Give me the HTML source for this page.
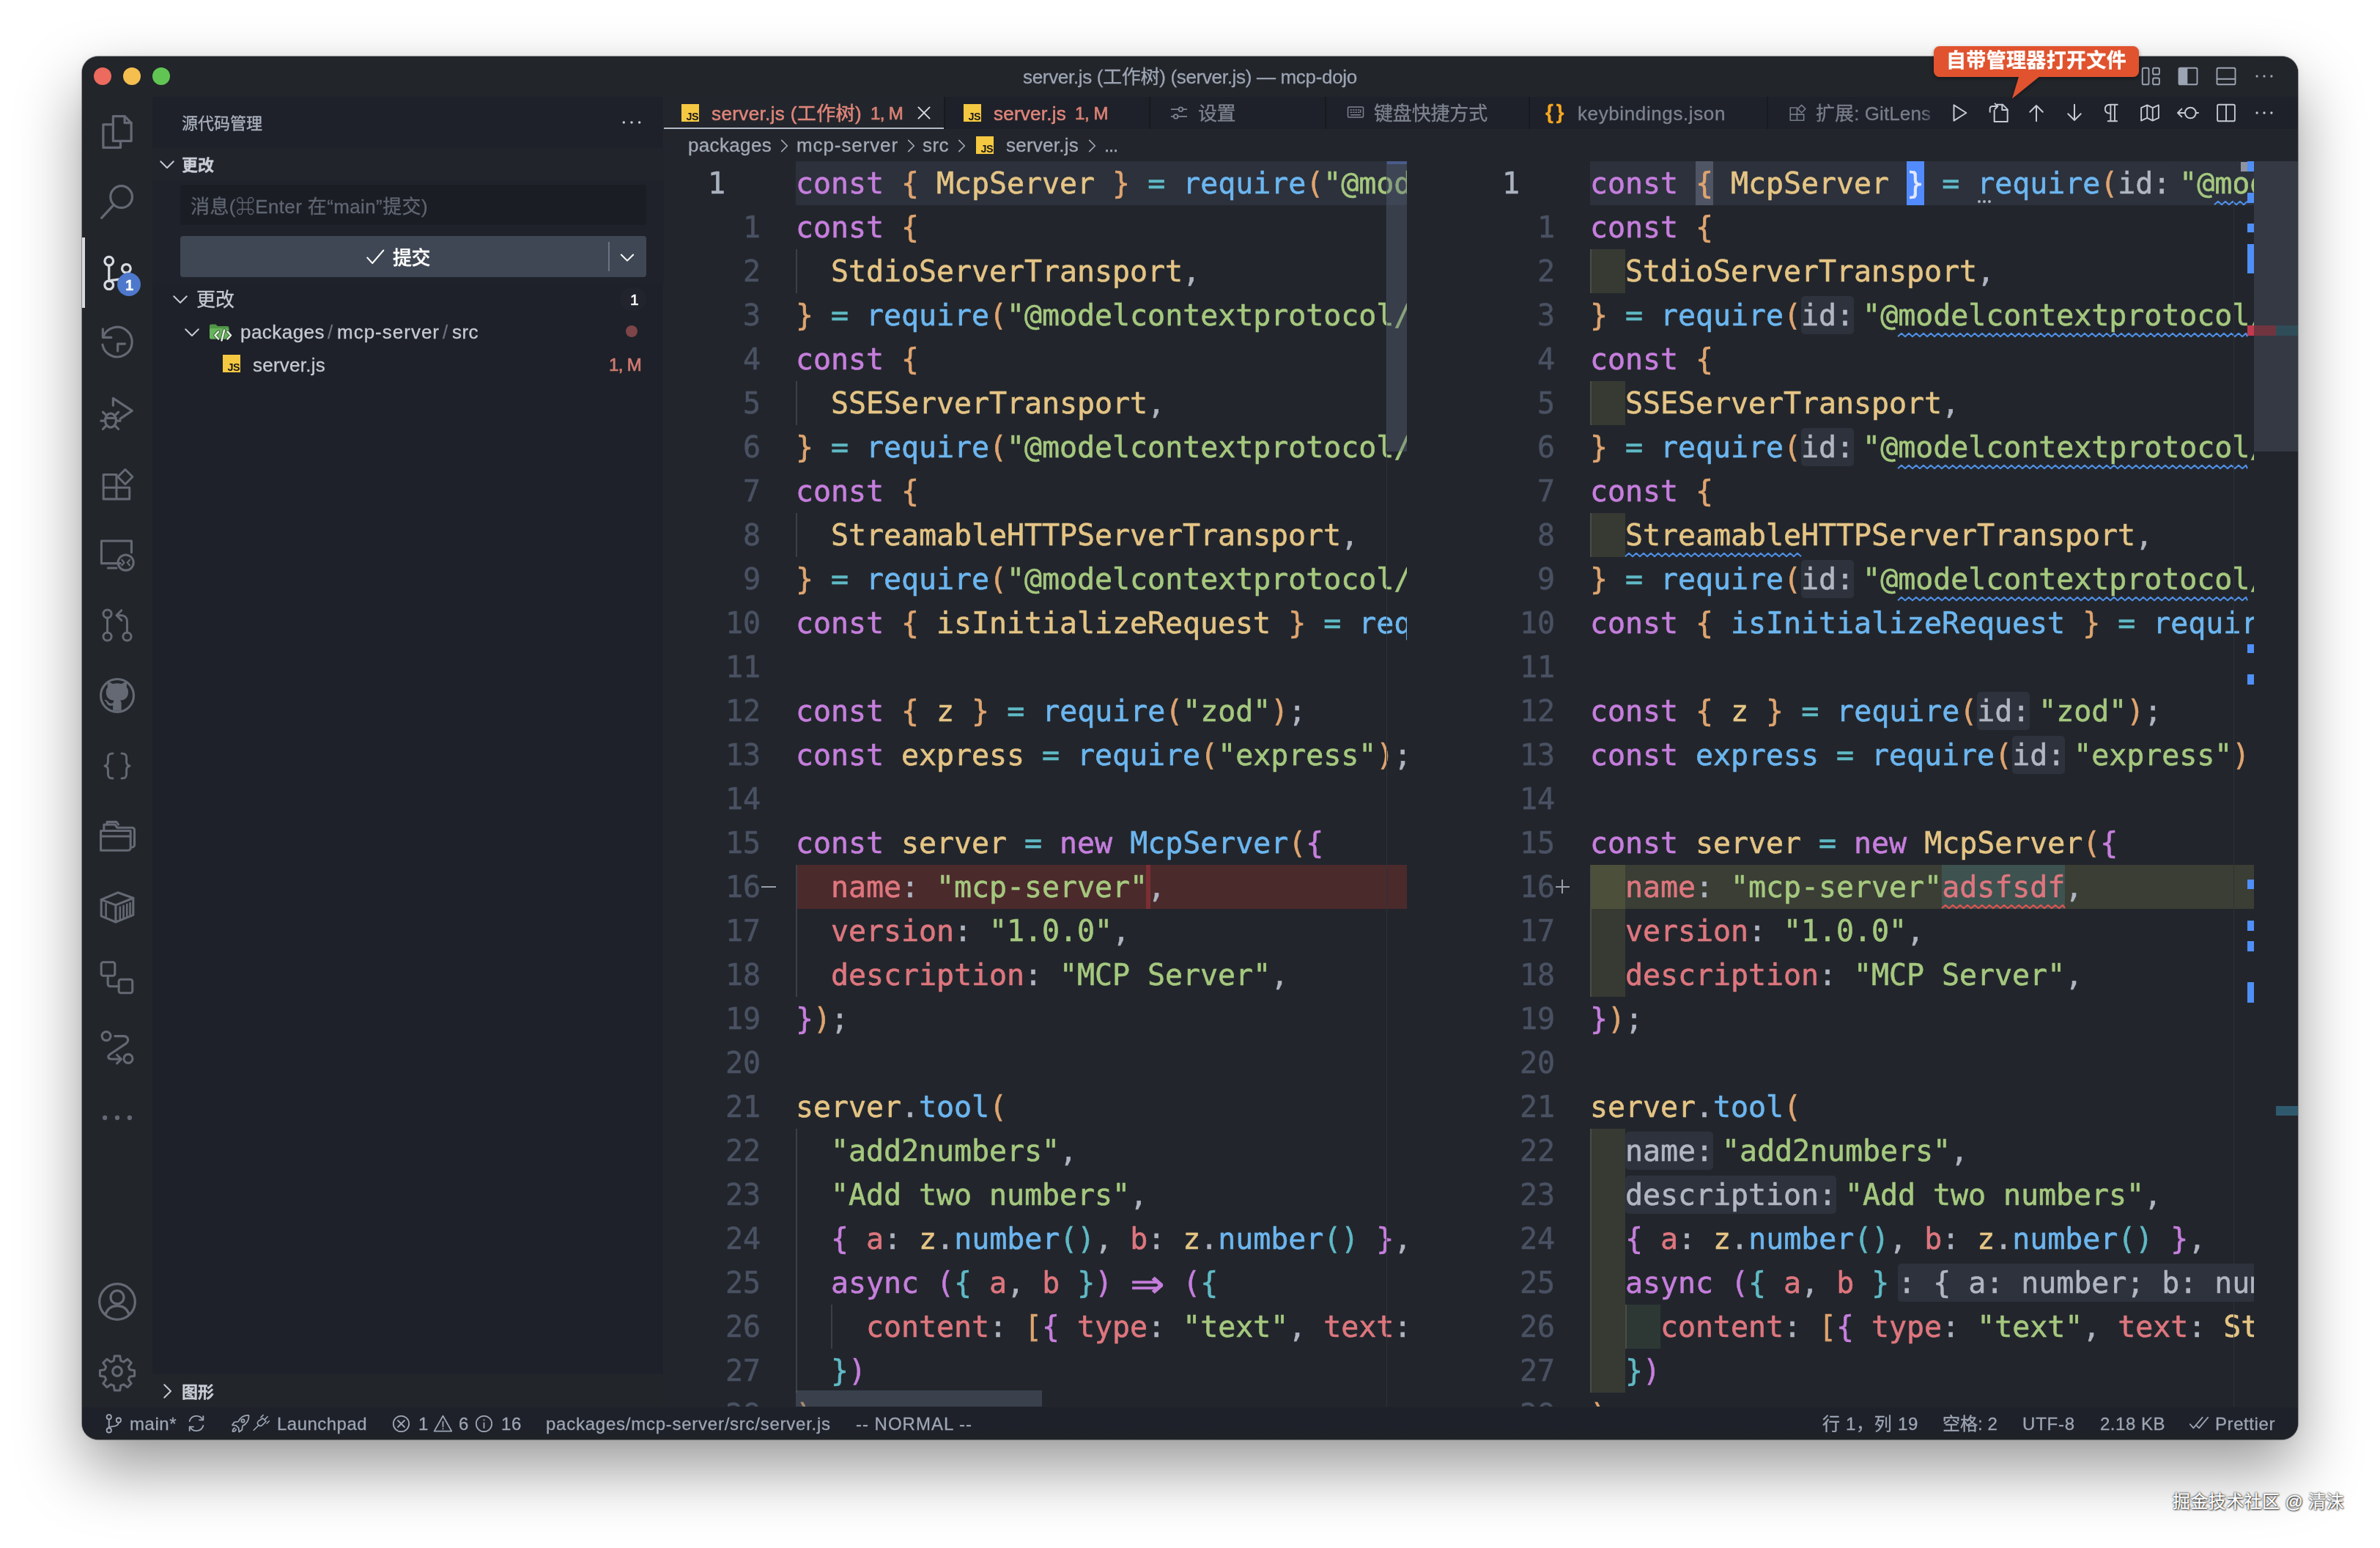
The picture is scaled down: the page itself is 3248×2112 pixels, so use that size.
<!DOCTYPE html>
<html lang="zh-CN"><head><meta charset="utf-8"><title>server.js (工作树) (server.js) — mcp-dojo</title>
<style>
html,body{margin:0;padding:0;}
body{width:3248px;height:2112px;background:#fff;position:relative;overflow:hidden;font-family:"Liberation Sans","Noto Sans CJK SC",sans-serif;}
.abs{position:absolute;}
.t{-webkit-text-stroke:0.3px currentColor;position:absolute;white-space:pre;font-family:"Liberation Sans","Noto Sans CJK SC",sans-serif;}
#win{position:absolute;left:112px;top:77px;width:3024px;height:1887px;border-radius:22px;background:#22262c;
  box-shadow:0 0 0 1px rgba(0,0,0,.32),0 40px 88px 0 rgba(0,0,0,.40),0 0 14px rgba(0,0,0,.05);}
#clip{position:absolute;left:112px;top:77px;width:3024px;height:1887px;border-radius:22px;overflow:hidden;}
/* everything inside #clip is positioned in page coordinates via #pg */
#pg{will-change:transform;position:absolute;left:-112px;top:-77px;width:3248px;height:2112px;}
.code{position:absolute;overflow:hidden;}
.ln{-webkit-text-stroke:0.55px currentColor;position:absolute;left:0;height:60px;white-space:pre;font-family:"DejaVu Sans Mono","Liberation Mono",monospace;font-size:40px;line-height:60px;letter-spacing:-0.08px;color:#abb2bf;}
.num{-webkit-text-stroke:0.5px currentColor;position:absolute;height:60px;width:72px;font-family:"DejaVu Sans Mono","Liberation Mono",monospace;font-size:40px;line-height:60px;letter-spacing:-0.08px;color:#495162;text-align:right;white-space:pre;}
.num.cur{text-align:left;color:#abb2bf;}
.k{color:#c67edd}.y{color:#e5c484}.b{color:#6cb6f0}.g{color:#a5c87e}.r{color:#de767e}.c{color:#5fb9c5}.o{color:#dfa46f}.w{color:#aeb4c0}
.hint{display:inline-block;height:52px;line-height:52px;vertical-align:top;margin-top:4px;background:#2e323c;color:#b0b6c2;border-radius:5px;}
.hl{margin-right:12px}.hr{margin-left:12px}
.lig{display:inline-block;width:48px;text-align:center;letter-spacing:0;}
svg{position:absolute;overflow:visible;}
</style></head><body>
<div id="win"></div>
<div id="clip"><div id="pg">
<div class="abs" style="left:112px;top:76px;width:3024px;height:56px;background:#22252a"></div>
<div class="abs" style="left:128px;top:92px;width:24px;height:24px;border-radius:50%;background:#ec6a5e"></div>
<div class="abs" style="left:168px;top:92px;width:24px;height:24px;border-radius:50%;background:#f4bf4f"></div>
<div class="abs" style="left:208px;top:92px;width:24px;height:24px;border-radius:50%;background:#61c554"></div>
<span class="t" id="t0" style="left:1396px;top:85.5px;font-size:26px;line-height:39.0px;color:#9da5b4;letter-spacing:-0.32px;">server.js (工作树) (server.js) — mcp-dojo</span><div class="abs" style="left:112px;top:132px;width:96px;height:1787px;background:#22252a"></div><div class="abs" style="left:112px;top:324px;width:4px;height:96px;background:#d7dae0"></div><svg style="left:133.0px;top:153.0px" width="54" height="54" viewBox="0 0 24 24" fill="none" stroke="#646973" stroke-width="1.45" stroke-linecap="round" stroke-linejoin="round"><path d="M9.5 2.5h7l4 4v11h-11z"/><path d="M16.5 2.5v4h4"/><path d="M9.5 7.5h-6v14h10.5v-4"/></svg><svg style="left:133.0px;top:249.1px" width="54" height="54" viewBox="0 0 24 24" fill="none" stroke="#646973" stroke-width="1.45" stroke-linecap="round" stroke-linejoin="round"><circle cx="14.5" cy="8.7" r="6.6"/><path d="M10 13.400L2.500 21.500"/></svg><svg style="left:133.0px;top:345.2px" width="54" height="54" viewBox="0 0 24 24" fill="none" stroke="#d7dae0" stroke-width="1.45" stroke-linecap="round" stroke-linejoin="round"><circle cx="7" cy="5" r="2.6"/><circle cx="7" cy="19.5" r="2.6"/><circle cx="17.5" cy="9.5" r="2.6"/><path d="M7 7.6v9.3"/><path d="M17.5 12.1c0 3.4-3 3.9-6 4.2-2.2.2-4 .4-4.5.9"/></svg><svg style="left:133.0px;top:441.3px" width="54" height="54" viewBox="0 0 24 24" fill="none" stroke="#646973" stroke-width="1.45" stroke-linecap="round" stroke-linejoin="round"><g transform="translate(12 12) scale(0.97) translate(-12 -12)"><path d="M3.2 8.2A9.3 9.3 0 1 1 2.8 13"/><path d="M3 3.2v5.3h5.3"/><path d="M12.3 17v-4.5h4.5"/></g></svg><svg style="left:133.0px;top:537.4px" width="54" height="54" viewBox="0 0 24 24" fill="none" stroke="#646973" stroke-width="1.45" stroke-linecap="round" stroke-linejoin="round"><path d="M9.5 7.2V2.8l11.5 7.6-7.2 4.9"/><ellipse cx="8" cy="16.3" rx="3.3" ry="4.2"/><path d="M5.5 13.3L3.3 11.2M10.5 13.3l2.2-2.1M4.7 16.5H2.2M13.8 16.5h-2.5M5.5 19.3l-2.2 2.2M10.5 19.3l2.2 2.2M5 14.8h6"/></svg><svg style="left:133.0px;top:633.5px" width="54" height="54" viewBox="0 0 24 24" fill="none" stroke="#646973" stroke-width="1.45" stroke-linecap="round" stroke-linejoin="round"><g transform="translate(12 12) scale(0.93) translate(-12 -12)"><path d="M3 5.5h8.5v8.5H3zM3 14h8.5v7.5H3zM11.500 14h8.5v7.5h-8.5z"/><path d="M17.200 2.200l4.800 4.800-4.800 4.800-4.800-4.800z"/></g></svg><svg style="left:133.0px;top:729.6px" width="54" height="54" viewBox="0 0 24 24" fill="none" stroke="#646973" stroke-width="1.45" stroke-linecap="round" stroke-linejoin="round"><g transform="translate(12 12) scale(0.94) translate(-12 -12)"><path d="M14 17.500H1.800V3h19.400v7.500"/><path d="M6 20.500h5.500"/><circle cx="17.500" cy="17" r="5"/><path d="M15 15.300l1.500 1.700-1.500 1.700M20 15.300l-1.500 1.700 1.500 1.700" stroke-width="1.1"/></g></svg><svg style="left:133.0px;top:825.7px" width="54" height="54" viewBox="0 0 24 24" fill="none" stroke="#646973" stroke-width="1.45" stroke-linecap="round" stroke-linejoin="round"><g transform="translate(12 12) scale(0.92) translate(-12 -12)"><circle cx="5.5" cy="4.500" r="2.700"/><circle cx="5.500" cy="19.500" r="2.700"/><circle cx="18.500" cy="19.500" r="2.700"/><path d="M5.500 7.200v9.600"/><path d="M18.500 16.800V9.500c0-2.500-1.500-4-4-4h-2.500"/><path d="M14.800 2.200L11.500 5.500l3.300 3.300"/></g></svg><svg style="left:133.0px;top:921.8px" width="54" height="54" viewBox="0 0 24 24" fill="none" stroke="#646973" stroke-width="1.45" stroke-linecap="round" stroke-linejoin="round"><g transform="translate(12 12) scale(0.97) translate(-12 -12)"><circle cx="12" cy="12" r="10.300"/><path fill="#646973" stroke="none" d="M9.300 21.500v-3.300c-3 .7-3.700-1.300-3.700-1.300-.5-1.200-1.200-1.600-1.200-1.600-1-.7.100-.700.100-.700 1.100.1 1.700 1.100 1.700 1.100 1 1.700 2.600 1.200 3.200.9.100-.700.400-1.200.7-1.500-2.500-.3-5.100-1.200-5.100-5.500 0-1.200.4-2.200 1.100-3-.100-.3-.500-1.400.100-3 0 0 .900-.300 3 1.100a10.500 10.500 0 0 1 5.500 0c2.100-1.400 3-1.100 3-1.100.6 1.600.2 2.700.1 3 .700.800 1.100 1.800 1.100 3 0 4.300-2.600 5.200-5.100 5.500.4.300.8 1 .8 2v4.400z"/></g></svg><svg style="left:133.0px;top:1017.9px" width="54" height="54" viewBox="0 0 24 24" fill="none" stroke="#646973" stroke-width="1.45" stroke-linecap="round" stroke-linejoin="round"><g transform="translate(12 12) scale(0.89) translate(-12 -12)"><path d="M9 3.500c-2.500 0-3.300 1-3.300 3v2.800c0 1.500-.7 2.400-2.200 2.700 1.500.3 2.200 1.200 2.200 2.700v2.800c0 2 .8 3 3.300 3"/><path d="M15 3.500c2.500 0 3.300 1 3.300 3v2.800c0 1.500.7 2.400 2.200 2.700-1.500.3-2.200 1.200-2.200 2.700v2.800c0 2-.8 3-3.300 3"/></g></svg><svg style="left:133.0px;top:1114.0px" width="54" height="54" viewBox="0 0 24 24" fill="none" stroke="#646973" stroke-width="1.45" stroke-linecap="round" stroke-linejoin="round"><g transform="translate(12 12) scale(0.95) translate(-12 -12)"><path d="M1.500 21V8.500h19v11c0 .8-.7 1.500-1.500 1.500z"/><path d="M1.500 12h19"/><path d="M3.500 8.500V4.500h7l1.500 2h9.500c.8 0 1.500.7 1.500 1.500v9.500c0 .8-.7 1.500-1.500 1.500"/><path d="M5.500 4.500V2.800h6l1.200 1.700"/></g></svg><svg style="left:133.0px;top:1210.1px" width="54" height="54" viewBox="0 0 24 24" fill="none" stroke="#646973" stroke-width="1.45" stroke-linecap="round" stroke-linejoin="round"><g transform="translate(12 12) scale(0.95) translate(-12 -12)"><path d="M1.800 7.500L12.500 3l9.700 3.500v10.800L11 21.800 1.800 18z"/><path d="M1.800 7.500L11 11l11.200-4.500M11 11v10.800"/><path d="M13.800 12.200v7.500M16 11.400v7.500M18.200 10.500v7.500M20.200 9.700v7.500M4.800 10v8.500" stroke-width="1.200"/></g></svg><svg style="left:133.0px;top:1306.2px" width="54" height="54" viewBox="0 0 24 24" fill="none" stroke="#646973" stroke-width="1.45" stroke-linecap="round" stroke-linejoin="round"><g transform="translate(12 12) scale(0.95) translate(-12 -12)"><rect x="1.800" y="2.500" width="8.700" height="8.700" rx="1.300"/><rect x="13" y="13.500" width="8.700" height="8.700" rx="1.300"/><path d="M6 11.200v5.300c0 .8.700 1.500 1.500 1.500H13"/></g></svg><svg style="left:133.0px;top:1402.3px" width="54" height="54" viewBox="0 0 24 24" fill="none" stroke="#646973" stroke-width="1.45" stroke-linecap="round" stroke-linejoin="round"><g transform="translate(12 12) scale(0.95) translate(-12 -12)"><circle cx="5" cy="4.800" r="2.800"/><circle cx="19" cy="19.200" r="2.800"/><path d="M10.500 4.800h5.500c3 0 3.800 3 1.500 4.800L7.500 16.300c-2 1.500-1.500 3.200 1 3.200h5.500"/><path d="M11.800 16.800l2.700 2.700-2.700 2.700"/></g></svg><svg style="left:133.0px;top:1498.4px" width="54" height="54" viewBox="0 0 24 24" fill="none" stroke="#646973" stroke-width="1.45" stroke-linecap="round" stroke-linejoin="round"><circle cx="4.500" cy="12" r="1.400" fill="#646973" stroke="none"/><circle cx="12" cy="12" r="1.400" fill="#646973" stroke="none"/><circle cx="19.500" cy="12" r="1.400" fill="#646973" stroke="none"/></svg><svg style="left:133.0px;top:1749.0px" width="54" height="54" viewBox="0 0 24 24" fill="none" stroke="#646973" stroke-width="1.45" stroke-linecap="round" stroke-linejoin="round"><circle cx="12" cy="12" r="10.800"/><circle cx="12" cy="9.300" r="4"/><path d="M4.800 19.800c1.200-3.600 4-5.300 7.200-5.300s6 1.700 7.200 5.300"/></svg><svg style="left:133.0px;top:1844.0px" width="54" height="54" viewBox="0 0 24 24" fill="none" stroke="#646973" stroke-width="1.45" stroke-linecap="round" stroke-linejoin="round"><circle cx="12" cy="12" r="2.800"/><path d="M10.200 1.800h3.600l.5 3.200 1.900.8 2.600-1.900 2.500 2.500-1.900 2.600.8 1.900 3.200.5v3.600l-3.200.5-.8 1.900 1.900 2.600-2.500 2.500-2.600-1.900-1.900.8-.5 3.200h-3.600l-.5-3.200-1.900-.8-2.600 1.900-2.500-2.500 1.900-2.600-.8-1.900-3.200-.5v-3.600l3.200-.5.8-1.900-1.900-2.600 2.500-2.500 2.600 1.900 1.900-.8z" transform="translate(12 12) scale(.92) translate(-12 -12)"/></svg><div class="abs" style="left:160px;top:372px;width:32px;height:32px;border-radius:50%;background:#4d78cc"></div><span class="t" id="t1" style="left:171px;top:374.0px;font-size:20px;line-height:30.0px;color:#ffffff;font-weight:700;">1</span><div class="abs" style="left:208px;top:132px;width:697px;height:1787px;background:#1e2129"></div><span class="t" id="t2" style="left:248px;top:151.5px;font-size:22px;line-height:33.0px;color:#abb2bf;">源代码管理</span><svg style="left:846.0px;top:151.0px" width="32" height="32" viewBox="0 0 24 24" fill="none" stroke="#646973" stroke-width="1.5" stroke-linecap="round" stroke-linejoin="round"><circle cx="4" cy="12" r="1.3" fill="#c5cad3" stroke="none"/><circle cx="12" cy="12" r="1.3" fill="#c5cad3" stroke="none"/><circle cx="20" cy="12" r="1.3" fill="#c5cad3" stroke="none"/></svg><div class="abs" style="left:208px;top:202px;width:698px;height:44px;background:#21242b"></div><svg style="left:213.0px;top:209.0px" width="30" height="30" viewBox="0 0 24 24" fill="none" stroke="#c5cad3" stroke-width="1.6" stroke-linecap="round" stroke-linejoin="round"><path d="M5 9l7 7 7-7"/></svg><span class="t" id="t3" style="left:248px;top:208.5px;font-size:22px;line-height:33.0px;color:#c8ccd4;font-weight:700;letter-spacing:-0.01px;">更改</span><div class="abs" style="left:208px;top:246px;width:698px;height:140px;background:#1f222a"></div><div class="abs" style="left:246px;top:252px;width:636px;height:55px;background:#1b1d24;border-radius:4px"></div><span class="t" id="t4" style="left:260px;top:262.5px;font-size:26px;line-height:39.0px;color:#5f6672;letter-spacing:0.38px;">消息(⌘Enter 在“main”提交)</span><div class="abs" style="left:246px;top:322px;width:636px;height:56px;background:#404754;border-radius:4px"></div><svg style="left:497.0px;top:336.0px" width="30" height="30" viewBox="0 0 24 24" fill="none" stroke="#ffffff" stroke-width="1.7" stroke-linecap="round" stroke-linejoin="round"><path d="M3.500 12.500l5.500 6L21 4.500"/></svg><span class="t" id="t5" style="left:536px;top:332.5px;font-size:26px;line-height:39.0px;color:#ffffff;font-weight:500;letter-spacing:-0.51px;">提交</span><div class="abs" style="left:830px;top:330px;width:2px;height:40px;background:#6b7280"></div><svg style="left:842.0px;top:337.0px" width="28" height="28" viewBox="0 0 24 24" fill="none" stroke="#ffffff" stroke-width="1.7" stroke-linecap="round" stroke-linejoin="round"><path d="M5 9l7 7 7-7"/></svg><svg style="left:231.0px;top:393.0px" width="30" height="30" viewBox="0 0 24 24" fill="none" stroke="#c5cad3" stroke-width="1.6" stroke-linecap="round" stroke-linejoin="round"><path d="M5 9l7 7 7-7"/></svg><span class="t" id="t6" style="left:268px;top:389.5px;font-size:26px;line-height:39.0px;color:#c5cad3;letter-spacing:-0.01px;">更改</span><div class="abs" style="left:846px;top:392px;width:36px;height:32px;border-radius:16px;background:#21242c"></div><span class="t" id="t7" style="left:860px;top:393.2px;font-size:21px;line-height:31.5px;color:#ffffff;-webkit-text-stroke:0.6px currentColor;">1</span><svg style="left:247.0px;top:438.0px" width="30" height="30" viewBox="0 0 24 24" fill="none" stroke="#c5cad3" stroke-width="1.6" stroke-linecap="round" stroke-linejoin="round"><path d="M5 9l7 7 7-7"/></svg><svg style="left:284px;top:437px" width="36" height="32" viewBox="0 0 36 32"><path d="M2 7.500a2 2 0 0 1 2-2h6.500l2.500 2.500h13.400a2 2 0 0 1 2 2V23.400a2 2 0 0 1-2 2H4a2 2 0 0 1-2-2z" fill="#4f9645"/><path d="M2 12.500a1.500 1.500 0 0 1 1.500-1.500h23.400a1.500 1.500 0 0 1 1.500 1.500V23.400a2 2 0 0 1-2 2H4a2 2 0 0 1-2-2z" fill="#67b45b"/><path d="M14 15.500l-4.500 5 4.500 5M26.500 15.500l4.500 5-4.500 5M22 13.500l-3.500 14" fill="none" stroke="#1d2026" stroke-opacity=".55" stroke-width="4.600" stroke-linecap="round" stroke-linejoin="round"/><path d="M14 15.500l-4.500 5 4.500 5M26.500 15.500l4.500 5-4.500 5M22 13.500l-3.500 14" fill="none" stroke="#e4f3e2" stroke-width="2.500" stroke-linecap="round" stroke-linejoin="round"/></svg><span class="t" id="t8" style="left:328px;top:433.5px;font-size:26px;line-height:39.0px;color:#c5cad3;letter-spacing:0.46px;">packages</span><span class="t" id="t9" style="left:447px;top:433.5px;font-size:26px;line-height:39.0px;color:#6b717d;">/</span><span class="t" id="t10" style="left:460px;top:433.5px;font-size:26px;line-height:39.0px;color:#c5cad3;letter-spacing:1.00px;">mcp-server</span><span class="t" id="t11" style="left:604px;top:433.5px;font-size:26px;line-height:39.0px;color:#6b717d;">/</span><span class="t" id="t12" style="left:617px;top:433.5px;font-size:26px;line-height:39.0px;color:#c5cad3;letter-spacing:0.44px;">src</span><div class="abs" style="left:854px;top:444px;width:16px;height:16px;border-radius:50%;background:#7d4548"></div><div class="abs" style="left:304px;top:484px;width:24px;height:24px;background:#f5c842;overflow:hidden"><span style="position:absolute;right:1px;bottom:0px;font:700 14.4px/1 'Liberation Sans','Noto Sans CJK SC',sans-serif;color:#1a1a1a;letter-spacing:-0.5px">JS</span></div><span class="t" id="t13" style="left:345px;top:478.5px;font-size:26px;line-height:39.0px;color:#c5cad3;letter-spacing:0.24px;">server.js</span><span class="t" id="t14" style="left:831px;top:480.0px;font-size:24px;line-height:36.0px;color:#cf7a70;letter-spacing:-0.67px;-webkit-text-stroke:0.7px currentColor;">1, M</span><div class="abs" style="left:208px;top:1875px;width:698px;height:44px;background:#22252a"></div><svg style="left:213.0px;top:1883.0px" width="30" height="30" viewBox="0 0 24 24" fill="none" stroke="#c5cad3" stroke-width="1.6" stroke-linecap="round" stroke-linejoin="round"><path d="M9 5l7 7-7 7"/></svg><span class="t" id="t15" style="left:248px;top:1882.5px;font-size:22px;line-height:33.0px;color:#c8ccd4;font-weight:700;letter-spacing:-0.01px;">图形</span><div class="abs" style="left:906px;top:176px;width:2230px;height:1743px;background:#22262c"></div><div class="code" style="left:1086px;top:220px;width:834px;height:1699px"><div class="abs" style="left:0;top:0;width:834px;height:60px;background:#2c313c"></div><div class="abs" style="left:0;top:960px;width:834px;height:60px;background:#4b2a2c"></div><div class="abs" style="left:478px;top:960px;width:6px;height:60px;background:#7a2f33"></div><div class="abs" style="left:0px;top:120px;width:2px;height:60px;background:#3b4048"></div><div class="abs" style="left:0px;top:300px;width:2px;height:60px;background:#3b4048"></div><div class="abs" style="left:0px;top:480px;width:2px;height:60px;background:#3b4048"></div><div class="abs" style="left:0px;top:960px;width:2px;height:180px;background:#3b4048"></div><div class="abs" style="left:0px;top:1320px;width:2px;height:360px;background:#3b4048"></div><div class="abs" style="left:48px;top:1560px;width:2px;height:60px;background:#3b4048"></div><div class="ln" style="top:0px"><span class="k">const</span> <span class="o">{</span> <span class="y">McpServer</span> <span class="o">}</span> <span class="c">=</span> <span class="b">require</span><span class="o">(</span><span class="g">"</span><span class="g">@modelcontextprotocol/sdk/server/mcp.js</span><span class="g">"</span><span class="o">)</span><span class="w">;</span></div><div class="ln" style="top:60px"><span class="k">const</span> <span class="o">{</span></div><div class="ln" style="top:120px">  <span class="y">StdioServerTransport</span><span class="w">,</span></div><div class="ln" style="top:180px"><span class="o">}</span> <span class="c">=</span> <span class="b">require</span><span class="o">(</span><span class="g">"</span><span class="g">@modelcontextprotocol/sdk/server/stdio.js</span><span class="g">"</span><span class="o">)</span><span class="w">;</span></div><div class="ln" style="top:240px"><span class="k">const</span> <span class="o">{</span></div><div class="ln" style="top:300px">  <span class="y">SSEServerTransport</span><span class="w">,</span></div><div class="ln" style="top:360px"><span class="o">}</span> <span class="c">=</span> <span class="b">require</span><span class="o">(</span><span class="g">"</span><span class="g">@modelcontextprotocol/sdk/server/sse.js</span><span class="g">"</span><span class="o">)</span><span class="w">;</span></div><div class="ln" style="top:420px"><span class="k">const</span> <span class="o">{</span></div><div class="ln" style="top:480px">  <span class="y">StreamableHTTPServerTransport</span><span class="w">,</span></div><div class="ln" style="top:540px"><span class="o">}</span> <span class="c">=</span> <span class="b">require</span><span class="o">(</span><span class="g">"</span><span class="g">@modelcontextprotocol/sdk/server/streamableHttp.js</span><span class="g">"</span><span class="o">)</span><span class="w">;</span></div><div class="ln" style="top:600px"><span class="k">const</span> <span class="o">{</span> <span class="y">isInitializeRequest</span> <span class="o">}</span> <span class="c">=</span> <span class="b">require</span><span class="o">(</span><span class="g">"</span><span class="g">@modelcontextprotocol/sdk/types.js</span><span class="g">"</span><span class="o">)</span><span class="w">;</span></div><div class="ln" style="top:660px"></div><div class="ln" style="top:720px"><span class="k">const</span> <span class="o">{</span> <span class="y">z</span> <span class="o">}</span> <span class="c">=</span> <span class="b">require</span><span class="o">(</span><span class="g">"</span><span class="g">zod</span><span class="g">"</span><span class="o">)</span><span class="w">;</span></div><div class="ln" style="top:780px"><span class="k">const</span> <span class="y">express</span> <span class="c">=</span> <span class="b">require</span><span class="o">(</span><span class="g">"</span><span class="g">express</span><span class="g">"</span><span class="o">)</span><span class="w">;</span></div><div class="ln" style="top:840px"></div><div class="ln" style="top:900px"><span class="k">const</span> <span class="y">server</span> <span class="c">=</span> <span class="k">new</span> <span class="b">McpServer</span><span class="o">(</span><span class="k">{</span></div><div class="ln" style="top:960px">  <span class="r">name</span><span class="w">:</span> <span class="g">"</span><span class="g">mcp-server</span><span class="g">"</span><span class="w">,</span></div><div class="ln" style="top:1020px">  <span class="r">version</span><span class="w">:</span> <span class="g">"</span><span class="g">1.0.0</span><span class="g">"</span><span class="w">,</span></div><div class="ln" style="top:1080px">  <span class="r">description</span><span class="w">:</span> <span class="g">"</span><span class="g">MCP Server</span><span class="g">"</span><span class="w">,</span></div><div class="ln" style="top:1140px"><span class="k">}</span><span class="o">)</span><span class="w">;</span></div><div class="ln" style="top:1200px"></div><div class="ln" style="top:1260px"><span class="y">server</span><span class="w">.</span><span class="b">tool</span><span class="o">(</span></div><div class="ln" style="top:1320px">  <span class="g">"</span><span class="g">add2numbers</span><span class="g">"</span><span class="w">,</span></div><div class="ln" style="top:1380px">  <span class="g">"</span><span class="g">Add two numbers</span><span class="g">"</span><span class="w">,</span></div><div class="ln" style="top:1440px">  <span class="k">{</span> <span class="r">a</span><span class="w">:</span> <span class="y">z</span><span class="w">.</span><span class="b">number</span><span class="c">()</span><span class="w">,</span> <span class="r">b</span><span class="w">:</span> <span class="y">z</span><span class="w">.</span><span class="b">number</span><span class="c">()</span> <span class="k">}</span><span class="w">,</span></div><div class="ln" style="top:1500px">  <span class="k">async</span> <span class="k">(</span><span class="c">{</span> <span class="r">a</span><span class="w">,</span> <span class="r">b</span> <span class="c">}</span><span class="k">)</span> <span class="k lig"><span style="display:inline-block;transform:scale(1.9,1.7) translateY(-1px)">⇒</span></span> <span class="k">(</span><span class="c">{</span></div><div class="ln" style="top:1560px">    <span class="r">content</span><span class="w">:</span> <span class="o">[</span><span class="k">{</span> <span class="r">type</span><span class="w">:</span> <span class="g">"</span><span class="g">text</span><span class="g">"</span><span class="w">,</span> <span class="r">text</span><span class="w">:</span> <span class="y">String</span><span class="c">(</span><span class="r">a</span> <span class="c">+</span> <span class="r">b</span><span class="c">)</span> <span class="k">}</span><span class="o">]</span><span class="w">,</span></div><div class="ln" style="top:1620px">  <span class="c">}</span><span class="k">)</span></div><div class="ln" style="top:1680px"><span class="o">)</span><span class="w">;</span></div></div><div class="num cur" style="left:966px;top:220px">1</div><div class="num" style="left:966px;top:280px;">1</div><div class="num" style="left:966px;top:340px;">2</div><div class="num" style="left:966px;top:400px;">3</div><div class="num" style="left:966px;top:460px;">4</div><div class="num" style="left:966px;top:520px;">5</div><div class="num" style="left:966px;top:580px;">6</div><div class="num" style="left:966px;top:640px;">7</div><div class="num" style="left:966px;top:700px;">8</div><div class="num" style="left:966px;top:760px;">9</div><div class="num" style="left:966px;top:820px;">10</div><div class="num" style="left:966px;top:880px;">11</div><div class="num" style="left:966px;top:940px;">12</div><div class="num" style="left:966px;top:1000px;">13</div><div class="num" style="left:966px;top:1060px;">14</div><div class="num" style="left:966px;top:1120px;">15</div><div class="num" style="left:966px;top:1180px;">16</div><div class="num" style="left:966px;top:1240px;">17</div><div class="num" style="left:966px;top:1300px;">18</div><div class="num" style="left:966px;top:1360px;">19</div><div class="num" style="left:966px;top:1420px;">20</div><div class="num" style="left:966px;top:1480px;">21</div><div class="num" style="left:966px;top:1540px;">22</div><div class="num" style="left:966px;top:1600px;">23</div><div class="num" style="left:966px;top:1660px;">24</div><div class="num" style="left:966px;top:1720px;">25</div><div class="num" style="left:966px;top:1780px;">26</div><div class="num" style="left:966px;top:1840px;">27</div><div class="num" style="left:966px;top:1900px;height:19px;overflow:hidden;">28</div><div class="code" style="left:2170px;top:220px;width:906px;height:1699px"><div class="abs" style="left:0;top:0;width:906px;height:60px;background:#2c313c"></div><div class="abs" style="left:0;top:960px;width:906px;height:60px;background:#3a3e35"></div><div class="abs" style="left:0px;top:120px;width:48px;height:60px;background:#373a33"></div><div class="abs" style="left:0px;top:120px;width:2px;height:60px;background:#4a4d45"></div><div class="abs" style="left:0px;top:300px;width:48px;height:60px;background:#373a33"></div><div class="abs" style="left:0px;top:300px;width:2px;height:60px;background:#4a4d45"></div><div class="abs" style="left:0px;top:480px;width:48px;height:60px;background:#373a33"></div><div class="abs" style="left:0px;top:480px;width:2px;height:60px;background:#4a4d45"></div><div class="abs" style="left:0px;top:960px;width:48px;height:180px;background:#373a33"></div><div class="abs" style="left:0px;top:960px;width:48px;height:60px;background:#4c503a"></div><div class="abs" style="left:0px;top:960px;width:2px;height:180px;background:#4a4d45"></div><div class="abs" style="left:0px;top:1320px;width:48px;height:360px;background:#373a33"></div><div class="abs" style="left:0px;top:1320px;width:2px;height:360px;background:#4a4d45"></div><div class="abs" style="left:48px;top:1560px;width:48px;height:60px;background:#2d3835"></div><div class="abs" style="left:48px;top:1560px;width:2px;height:60px;background:#4a4d45"></div><div class="abs" style="left:144px;top:0;width:24px;height:60px;background:#505565"></div><div class="abs" style="left:432px;top:0;width:24px;height:60px;background:#528bff"></div><div class="ln" style="top:0px"><span class="k">const</span> <span class="o">{</span> <span class="y">McpServer</span> <span style="color:#e3e8ff">}</span> <span class="c">=</span> <span class="b">require</span><span class="o">(</span><span class="hint hl">id:</span><span class="g">"</span><span class="g">@modelcontextprotocol/sdk/server/mcp.js</span><span class="g">"</span><span class="o">)</span><span class="w">;</span></div><div class="ln" style="top:60px"><span class="k">const</span> <span class="o">{</span></div><div class="ln" style="top:120px">  <span class="y">StdioServerTransport</span><span class="w">,</span></div><div class="ln" style="top:180px"><span class="o">}</span> <span class="c">=</span> <span class="b">require</span><span class="o">(</span><span class="hint hl">id:</span><span class="g">"</span><span class="g">@modelcontextprotocol/sdk/server/stdio.js</span><span class="g">"</span><span class="o">)</span><span class="w">;</span></div><div class="ln" style="top:240px"><span class="k">const</span> <span class="o">{</span></div><div class="ln" style="top:300px">  <span class="y">SSEServerTransport</span><span class="w">,</span></div><div class="ln" style="top:360px"><span class="o">}</span> <span class="c">=</span> <span class="b">require</span><span class="o">(</span><span class="hint hl">id:</span><span class="g">"</span><span class="g">@modelcontextprotocol/sdk/server/sse.js</span><span class="g">"</span><span class="o">)</span><span class="w">;</span></div><div class="ln" style="top:420px"><span class="k">const</span> <span class="o">{</span></div><div class="ln" style="top:480px">  <span class="y">StreamableHTTPServerTransport</span><span class="w">,</span></div><div class="ln" style="top:540px"><span class="o">}</span> <span class="c">=</span> <span class="b">require</span><span class="o">(</span><span class="hint hl">id:</span><span class="g">"</span><span class="g">@modelcontextprotocol/sdk/server/streamableHttp.js</span><span class="g">"</span><span class="o">)</span><span class="w">;</span></div><div class="ln" style="top:600px"><span class="k">const</span> <span class="o">{</span> <span class="b">isInitializeRequest</span> <span class="o">}</span> <span class="c">=</span> <span class="b">require</span><span class="o">(</span><span class="g">"</span><span class="g">@modelcontextprotocol/sdk/types.js</span><span class="g">"</span><span class="o">)</span><span class="w">;</span></div><div class="ln" style="top:660px"></div><div class="ln" style="top:720px"><span class="k">const</span> <span class="o">{</span> <span class="y">z</span> <span class="o">}</span> <span class="c">=</span> <span class="b">require</span><span class="o">(</span><span class="hint hl">id:</span><span class="g">"</span><span class="g">zod</span><span class="g">"</span><span class="o">)</span><span class="w">;</span></div><div class="ln" style="top:780px"><span class="k">const</span> <span class="b">express</span> <span class="c">=</span> <span class="b">require</span><span class="o">(</span><span class="hint hl">id:</span><span class="g">"</span><span class="g">express</span><span class="g">"</span><span class="o">)</span><span class="w">;</span></div><div class="ln" style="top:840px"></div><div class="ln" style="top:900px"><span class="k">const</span> <span class="y">server</span> <span class="c">=</span> <span class="k">new</span> <span class="y">McpServer</span><span class="o">(</span><span class="k">{</span></div><div class="ln" style="top:960px">  <span class="r">name</span><span class="w">:</span> <span class="g">"</span><span class="g">mcp-server</span><span class="g">"</span><span class="r" style="background:#3e524f;display:inline-block;height:60px;vertical-align:top">adsfsdf</span><span class="w">,</span></div><div class="ln" style="top:1020px">  <span class="r">version</span><span class="w">:</span> <span class="g">"</span><span class="g">1.0.0</span><span class="g">"</span><span class="w">,</span></div><div class="ln" style="top:1080px">  <span class="r">description</span><span class="w">:</span> <span class="g">"</span><span class="g">MCP Server</span><span class="g">"</span><span class="w">,</span></div><div class="ln" style="top:1140px"><span class="k">}</span><span class="o">)</span><span class="w">;</span></div><div class="ln" style="top:1200px"></div><div class="ln" style="top:1260px"><span class="y">server</span><span class="w">.</span><span class="b">tool</span><span class="o">(</span></div><div class="ln" style="top:1320px">  <span class="hint hl">name:</span><span class="g">"</span><span class="g">add2numbers</span><span class="g">"</span><span class="w">,</span></div><div class="ln" style="top:1380px">  <span class="hint hl">description:</span><span class="g">"</span><span class="g">Add two numbers</span><span class="g">"</span><span class="w">,</span></div><div class="ln" style="top:1440px">  <span class="k">{</span> <span class="r">a</span><span class="w">:</span> <span class="y">z</span><span class="w">.</span><span class="b">number</span><span class="c">()</span><span class="w">,</span> <span class="r">b</span><span class="w">:</span> <span class="y">z</span><span class="w">.</span><span class="b">number</span><span class="c">()</span> <span class="k">}</span><span class="w">,</span></div><div class="ln" style="top:1500px">  <span class="k">async</span> <span class="k">(</span><span class="c">{</span> <span class="r">a</span><span class="w">,</span> <span class="r">b</span> <span class="c">}</span><span class="hint hr">: { a: number; b: number; }</span><span class="k">)</span> <span class="k lig"><span style="display:inline-block;transform:scale(1.9,1.7) translateY(-1px)">⇒</span></span> <span class="k">(</span><span class="c">{</span></div><div class="ln" style="top:1560px">    <span class="r">content</span><span class="w">:</span> <span class="o">[</span><span class="k">{</span> <span class="r">type</span><span class="w">:</span> <span class="g">"</span><span class="g">text</span><span class="g">"</span><span class="w">,</span> <span class="r">text</span><span class="w">:</span> <span class="y">String</span><span class="c">(</span><span class="r">a</span> <span class="c">+</span> <span class="r">b</span><span class="c">)</span> <span class="k">}</span><span class="o">]</span><span class="w">,</span></div><div class="ln" style="top:1620px">  <span class="c">}</span><span class="k">)</span></div><div class="ln" style="top:1680px"><span class="o">)</span><span class="w">;</span></div></div><div class="num cur" style="left:2050px;top:220px">1</div><div class="num" style="left:2050px;top:280px;">1</div><div class="num" style="left:2050px;top:340px;">2</div><div class="num" style="left:2050px;top:400px;">3</div><div class="num" style="left:2050px;top:460px;">4</div><div class="num" style="left:2050px;top:520px;">5</div><div class="num" style="left:2050px;top:580px;">6</div><div class="num" style="left:2050px;top:640px;">7</div><div class="num" style="left:2050px;top:700px;">8</div><div class="num" style="left:2050px;top:760px;">9</div><div class="num" style="left:2050px;top:820px;">10</div><div class="num" style="left:2050px;top:880px;">11</div><div class="num" style="left:2050px;top:940px;">12</div><div class="num" style="left:2050px;top:1000px;">13</div><div class="num" style="left:2050px;top:1060px;">14</div><div class="num" style="left:2050px;top:1120px;">15</div><div class="num" style="left:2050px;top:1180px;">16</div><div class="num" style="left:2050px;top:1240px;">17</div><div class="num" style="left:2050px;top:1300px;">18</div><div class="num" style="left:2050px;top:1360px;">19</div><div class="num" style="left:2050px;top:1420px;">20</div><div class="num" style="left:2050px;top:1480px;">21</div><div class="num" style="left:2050px;top:1540px;">22</div><div class="num" style="left:2050px;top:1600px;">23</div><div class="num" style="left:2050px;top:1660px;">24</div><div class="num" style="left:2050px;top:1720px;">25</div><div class="num" style="left:2050px;top:1780px;">26</div><div class="num" style="left:2050px;top:1840px;">27</div><div class="num" style="left:2050px;top:1900px;height:19px;overflow:hidden;">28</div><svg style="left:0;top:0" width="3248" height="2112"><path d="M2590 459.2L2595 454.8L2600 459.2L2605 454.8L2610 459.2L2615 454.8L2620 459.2L2625 454.8L2630 459.2L2635 454.8L2640 459.2L2645 454.8L2650 459.2L2655 454.8L2660 459.2L2665 454.8L2670 459.2L2675 454.8L2680 459.2L2685 454.8L2690 459.2L2695 454.8L2700 459.2L2705 454.8L2710 459.2L2715 454.8L2720 459.2L2725 454.8L2730 459.2L2735 454.8L2740 459.2L2745 454.8L2750 459.2L2755 454.8L2760 459.2L2765 454.8L2770 459.2L2775 454.8L2780 459.2L2785 454.8L2790 459.2L2795 454.8L2800 459.2L2805 454.8L2810 459.2L2815 454.8L2820 459.2L2825 454.8L2830 459.2L2835 454.8L2840 459.2L2845 454.8L2850 459.2L2855 454.8L2860 459.2L2865 454.8L2870 459.2L2875 454.8L2880 459.2L2885 454.8L2890 459.2L2895 454.8L2900 459.2L2905 454.8L2910 459.2L2915 454.8L2920 459.2L2925 454.8L2930 459.2L2935 454.8L2940 459.2L2945 454.8L2950 459.2L2955 454.8L2960 459.2L2965 454.8L2970 459.2L2975 454.8L2980 459.2L2985 454.8L2990 459.2L2995 454.8L3000 459.2L3005 454.8L3010 459.2L3015 454.8L3020 459.2L3025 454.8L3030 459.2L3035 454.8L3040 459.2L3045 454.8L3050 459.2L3055 454.8L3060 459.2L3065 454.8L3067 459.2" fill="none" stroke="#4f8fe6" stroke-width="2.1" stroke-linejoin="round"/></svg><svg style="left:0;top:0" width="3248" height="2112"><path d="M2590 639.2L2595 634.8L2600 639.2L2605 634.8L2610 639.2L2615 634.8L2620 639.2L2625 634.8L2630 639.2L2635 634.8L2640 639.2L2645 634.8L2650 639.2L2655 634.8L2660 639.2L2665 634.8L2670 639.2L2675 634.8L2680 639.2L2685 634.8L2690 639.2L2695 634.8L2700 639.2L2705 634.8L2710 639.2L2715 634.8L2720 639.2L2725 634.8L2730 639.2L2735 634.8L2740 639.2L2745 634.8L2750 639.2L2755 634.8L2760 639.2L2765 634.8L2770 639.2L2775 634.8L2780 639.2L2785 634.8L2790 639.2L2795 634.8L2800 639.2L2805 634.8L2810 639.2L2815 634.8L2820 639.2L2825 634.8L2830 639.2L2835 634.8L2840 639.2L2845 634.8L2850 639.2L2855 634.8L2860 639.2L2865 634.8L2870 639.2L2875 634.8L2880 639.2L2885 634.8L2890 639.2L2895 634.8L2900 639.2L2905 634.8L2910 639.2L2915 634.8L2920 639.2L2925 634.8L2930 639.2L2935 634.8L2940 639.2L2945 634.8L2950 639.2L2955 634.8L2960 639.2L2965 634.8L2970 639.2L2975 634.8L2980 639.2L2985 634.8L2990 639.2L2995 634.8L3000 639.2L3005 634.8L3010 639.2L3015 634.8L3020 639.2L3025 634.8L3030 639.2L3035 634.8L3040 639.2L3045 634.8L3050 639.2L3055 634.8L3060 639.2L3065 634.8L3067 639.2" fill="none" stroke="#4f8fe6" stroke-width="2.1" stroke-linejoin="round"/></svg><svg style="left:0;top:0" width="3248" height="2112"><path d="M2590 819.2L2595 814.8L2600 819.2L2605 814.8L2610 819.2L2615 814.8L2620 819.2L2625 814.8L2630 819.2L2635 814.8L2640 819.2L2645 814.8L2650 819.2L2655 814.8L2660 819.2L2665 814.8L2670 819.2L2675 814.8L2680 819.2L2685 814.8L2690 819.2L2695 814.8L2700 819.2L2705 814.8L2710 819.2L2715 814.8L2720 819.2L2725 814.8L2730 819.2L2735 814.8L2740 819.2L2745 814.8L2750 819.2L2755 814.8L2760 819.2L2765 814.8L2770 819.2L2775 814.8L2780 819.2L2785 814.8L2790 819.2L2795 814.8L2800 819.2L2805 814.8L2810 819.2L2815 814.8L2820 819.2L2825 814.8L2830 819.2L2835 814.8L2840 819.2L2845 814.8L2850 819.2L2855 814.8L2860 819.2L2865 814.8L2870 819.2L2875 814.8L2880 819.2L2885 814.8L2890 819.2L2895 814.8L2900 819.2L2905 814.8L2910 819.2L2915 814.8L2920 819.2L2925 814.8L2930 819.2L2935 814.8L2940 819.2L2945 814.8L2950 819.2L2955 814.8L2960 819.2L2965 814.8L2970 819.2L2975 814.8L2980 819.2L2985 814.8L2990 819.2L2995 814.8L3000 819.2L3005 814.8L3010 819.2L3015 814.8L3020 819.2L3025 814.8L3030 819.2L3035 814.8L3040 819.2L3045 814.8L3050 819.2L3055 814.8L3060 819.2L3065 814.8L3067 819.2" fill="none" stroke="#4f8fe6" stroke-width="2.1" stroke-linejoin="round"/></svg><svg style="left:0;top:0" width="3248" height="2112"><path d="M3022 279.2L3027 274.8L3032 279.2L3037 274.8L3042 279.2L3047 274.8L3052 279.2L3057 274.8L3062 279.2L3067 274.8" fill="none" stroke="#4f8fe6" stroke-width="2.1" stroke-linejoin="round"/></svg><svg style="left:0;top:0" width="3248" height="2112"><path d="M2218 759.2L2223 754.8L2228 759.2L2233 754.8L2238 759.2L2243 754.8L2248 759.2L2253 754.8L2258 759.2L2263 754.8L2268 759.2L2273 754.8L2278 759.2L2283 754.8L2288 759.2L2293 754.8L2298 759.2L2303 754.8L2308 759.2L2313 754.8L2318 759.2L2323 754.8L2328 759.2L2333 754.8L2338 759.2L2343 754.8L2348 759.2L2353 754.8L2358 759.2L2363 754.8L2368 759.2L2373 754.8L2378 759.2L2383 754.8L2388 759.2L2393 754.8L2398 759.2L2403 754.8L2408 759.2L2413 754.8L2418 759.2L2423 754.8L2428 759.2L2433 754.8L2438 759.2L2443 754.8L2448 759.2L2453 754.8L2458 759.2" fill="none" stroke="#4f8fe6" stroke-width="2.1" stroke-linejoin="round"/></svg><svg style="left:0;top:0" width="3248" height="2112"><path d="M2650 1239.2L2655 1234.8L2660 1239.2L2665 1234.8L2670 1239.2L2675 1234.8L2680 1239.2L2685 1234.8L2690 1239.2L2695 1234.8L2700 1239.2L2705 1234.8L2710 1239.2L2715 1234.8L2720 1239.2L2725 1234.8L2730 1239.2L2735 1234.8L2740 1239.2L2745 1234.8L2750 1239.2L2755 1234.8L2760 1239.2L2765 1234.8L2770 1239.2L2775 1234.8L2780 1239.2L2785 1234.8L2790 1239.2L2795 1234.8L2800 1239.2L2805 1234.8L2810 1239.2L2815 1234.8L2818 1239.2" fill="none" stroke="#e0524f" stroke-width="2.1" stroke-linejoin="round"/></svg><div class="abs" style="left:2699px;top:273px;width:4px;height:4px;border-radius:50%;background:#abb2bf"></div><div class="abs" style="left:2706px;top:273px;width:4px;height:4px;border-radius:50%;background:#abb2bf"></div><div class="abs" style="left:2713px;top:273px;width:4px;height:4px;border-radius:50%;background:#abb2bf"></div><div class="abs" style="left:1039px;top:1209px;width:20px;height:2px;background:#9aa0ab"></div><div class="abs" style="left:2123px;top:1209px;width:19px;height:2px;background:#9aa0ab"></div><div class="abs" style="left:2131px;top:1200px;width:2px;height:19px;background:#9aa0ab"></div><div class="abs" style="left:1892px;top:220px;width:1px;height:1699px;background:#2d323a"></div><div class="abs" style="left:1892px;top:220px;width:28px;height:396px;background:rgba(92,102,124,.38)"></div><div class="abs" style="left:1893px;top:220px;width:27px;height:4px;background:#4a5a8c"></div><div class="abs" style="left:1086px;top:1897px;width:336px;height:22px;background:rgba(92,102,124,.42)"></div><div class="abs" style="left:3048px;top:220px;width:1px;height:1699px;background:#2d323a"></div><div class="abs" style="left:3076px;top:220px;width:60px;height:1699px;background:#22262c"></div><div class="abs" style="left:3076px;top:220px;width:60px;height:396px;background:#343944"></div><div class="abs" style="left:3067px;top:444px;width:9px;height:14px;background:#c23a50"></div><div class="abs" style="left:3076px;top:444px;width:30px;height:14px;background:#70353f"></div><div class="abs" style="left:3106px;top:444px;width:30px;height:14px;background:#2f4d58"></div><div class="abs" style="left:3106px;top:1509px;width:30px;height:13px;background:#2f5a6e"></div><div class="abs" style="left:3067px;top:220px;width:9px;height:14px;background:#4f8ff7"></div><div class="abs" style="left:3067px;top:263px;width:9px;height:14px;background:#4f8ff7"></div><div class="abs" style="left:3067px;top:305px;width:9px;height:12px;background:#4f8ff7"></div><div class="abs" style="left:3067px;top:333px;width:9px;height:40px;background:#4f8ff7"></div><div class="abs" style="left:3067px;top:879px;width:9px;height:12px;background:#4f8ff7"></div><div class="abs" style="left:3067px;top:920px;width:9px;height:14px;background:#4f8ff7"></div><div class="abs" style="left:3067px;top:1200px;width:9px;height:13px;background:#4f8ff7"></div><div class="abs" style="left:3067px;top:1256px;width:9px;height:14px;background:#4f8ff7"></div><div class="abs" style="left:3067px;top:1284px;width:9px;height:14px;background:#4f8ff7"></div><div class="abs" style="left:3067px;top:1340px;width:9px;height:28px;background:#4f8ff7"></div><div class="abs" style="left:3058px;top:221px;width:9px;height:13px;background:#8d93a0"></div><div class="abs" style="left:906px;top:132px;width:2230px;height:44px;background:#1e2129"></div><div class="abs" style="left:906px;top:132px;width:382px;height:44px;background:#22262c"></div><div class="abs" style="left:906px;top:174px;width:382px;height:2px;background:#b4bac5"></div><div class="abs" style="left:1288px;top:132px;width:2px;height:44px;background:#181a1f"></div><div class="abs" style="left:1568px;top:132px;width:2px;height:44px;background:#181a1f"></div><div class="abs" style="left:1808px;top:132px;width:2px;height:44px;background:#181a1f"></div><div class="abs" style="left:2086px;top:132px;width:2px;height:44px;background:#181a1f"></div><div class="abs" style="left:2411px;top:132px;width:2px;height:44px;background:#181a1f"></div><div class="abs" style="left:930px;top:142px;width:24px;height:24px;background:#f5c842;overflow:hidden"><span style="position:absolute;right:1px;bottom:0px;font:700 14.4px/1 'Liberation Sans','Noto Sans CJK SC',sans-serif;color:#1a1a1a;letter-spacing:-0.5px">JS</span></div><span class="t" id="t16" style="left:971px;top:135.5px;font-size:26px;line-height:39.0px;color:#e0857a;letter-spacing:0.38px;-webkit-text-stroke:0.5px currentColor;">server.js (工作树)</span><span class="t" id="t17" style="left:1188px;top:137.0px;font-size:24px;line-height:36.0px;color:#d98074;letter-spacing:-0.67px;-webkit-text-stroke:0.7px currentColor;">1, M</span><svg style="left:1248.0px;top:141.0px" width="26" height="26" viewBox="0 0 24 24" fill="none" stroke="#d7dae0" stroke-width="1.8" stroke-linecap="round" stroke-linejoin="round"><path d="M5 5l14 14M19 5L5 19"/></svg><div class="abs" style="left:1315px;top:142px;width:24px;height:24px;background:#f5c842;overflow:hidden"><span style="position:absolute;right:1px;bottom:0px;font:700 14.4px/1 'Liberation Sans','Noto Sans CJK SC',sans-serif;color:#1a1a1a;letter-spacing:-0.5px">JS</span></div><span class="t" id="t18" style="left:1356px;top:135.5px;font-size:26px;line-height:39.0px;color:#e0857a;letter-spacing:0.24px;-webkit-text-stroke:0.5px currentColor;">server.js</span><span class="t" id="t19" style="left:1467px;top:137.0px;font-size:24px;line-height:36.0px;color:#d98074;letter-spacing:-0.42px;-webkit-text-stroke:0.7px currentColor;">1, M</span><svg style="left:1596.0px;top:141.0px" width="26" height="26" viewBox="0 0 24 24" fill="none" stroke="#7d838f" stroke-width="1.6" stroke-linecap="round" stroke-linejoin="round"><path d="M2.500 7.500h9M17 7.500h4.500M2.500 16.500h3M10.500 16.500h11"/><circle cx="14.200" cy="7.500" r="2.600"/><circle cx="8" cy="16.500" r="2.600"/></svg><span class="t" id="t20" style="left:1635px;top:135.5px;font-size:26px;line-height:39.0px;color:#7d838f;letter-spacing:-0.51px;">设置</span><svg style="left:1838.0px;top:141.0px" width="24" height="24" viewBox="0 0 24 24" fill="none" stroke="#7d838f" stroke-width="1.5" stroke-linecap="round" stroke-linejoin="round"><rect x="1.500" y="5" width="21" height="14" rx="1.500"/><path d="M5 9h1.500M8.500 9h1.500M12 9h1.500M15.500 9h1.500M5 12.300h1.500M8.500 12.300h1.500M12 12.300h1.500M15.500 12.300h1.500M18.800 9v3.300M5.500 15.800h13" stroke-width="1.400"/></svg><span class="t" id="t21" style="left:1875px;top:135.5px;font-size:26px;line-height:39.0px;color:#7d838f;letter-spacing:-0.17px;">键盘快捷方式</span><span class="t" id="t22" style="left:2109px;top:132.0px;font-size:28px;line-height:42.0px;color:#f5a623;font-weight:700;letter-spacing:3.60px;font-family:"DejaVu Sans Mono","Liberation Mono",monospace;">{}</span><span class="t" id="t23" style="left:2153px;top:135.5px;font-size:26px;line-height:39.0px;color:#7d838f;letter-spacing:0.61px;">keybindings.json</span><svg style="left:2440.0px;top:141.0px" width="26" height="26" viewBox="0 0 24 24" fill="none" stroke="#747a86" stroke-width="1.5" stroke-linecap="round" stroke-linejoin="round"><path d="M3 5.500h8.500v8.500H3zM3 14h8.500v7.500H3zM11.500 14h8.500v7.500h-8.500z"/><path d="M17.200 2.200l4.800 4.800-4.800 4.800-4.800-4.800z"/></svg><span class="t" id="t24" style="left:2478px;top:135.5px;font-size:26px;line-height:39.0px;color:#787e8a;letter-spacing:0.09px;">扩展: GitLens</span><div class="abs" style="left:2622px;top:134px;width:28px;height:40px;background:linear-gradient(90deg,rgba(30,33,41,0),#1e2129 80%)"></div><svg style="left:2659.0px;top:139.0px" width="30" height="30" viewBox="0 0 24 24" fill="none" stroke="#c5cad3" stroke-width="1.6" stroke-linecap="round" stroke-linejoin="round"><path d="M6 3.500v17l13.500-8.500z"/></svg><svg style="left:2711.0px;top:138.0px" width="32" height="32" viewBox="0 0 24 24" fill="none" stroke="#c5cad3" stroke-width="1.5" stroke-linecap="round" stroke-linejoin="round"><path d="M8 9.500V21h13.500V8.500L16.500 3.500H11"/><path d="M16 3.500v5.500h5.500"/><path d="M3.500 11V8c0-1.700 1-2.700 2.700-2.700h5"/><path d="M8.700 2.500l2.800 2.800-2.800 2.800"/></svg><svg style="left:2764.0px;top:139.0px" width="30" height="30" viewBox="0 0 24 24" fill="none" stroke="#c5cad3" stroke-width="1.6" stroke-linecap="round" stroke-linejoin="round"><path d="M12 21V4M5 11l7-7 7 7"/></svg><svg style="left:2816.0px;top:139.0px" width="30" height="30" viewBox="0 0 24 24" fill="none" stroke="#c5cad3" stroke-width="1.6" stroke-linecap="round" stroke-linejoin="round"><path d="M12 3v17M5 13l7 7 7-7"/></svg><svg style="left:2866.0px;top:139.0px" width="30" height="30" viewBox="0 0 24 24" fill="none" stroke="#c5cad3" stroke-width="1.5" stroke-linecap="round" stroke-linejoin="round"><path d="M11.500 3v18M16 3v18M8.500 21h10M19 3h-8c-3.500 0-5.500 2-5.500 4.800s2 4.700 5.500 4.700"/></svg><svg style="left:2919.0px;top:139.0px" width="30" height="30" viewBox="0 0 24 24" fill="none" stroke="#c5cad3" stroke-width="1.5" stroke-linecap="round" stroke-linejoin="round"><path d="M2.500 6.500l6.500-3 6 3 6.500-3v14l-6.500 3-6-3-6.500 3zM9 3.500v14M15 6.500v14"/></svg><svg style="left:2970.0px;top:138.0px" width="32" height="32" viewBox="0 0 24 24" fill="none" stroke="#c5cad3" stroke-width="1.5" stroke-linecap="round" stroke-linejoin="round"><circle cx="14.500" cy="12" r="5.500"/><path d="M9 12H1.500M5.500 8l-4 4 4 4M20 12h2.500"/></svg><svg style="left:3023.0px;top:139.0px" width="30" height="30" viewBox="0 0 24 24" fill="none" stroke="#c5cad3" stroke-width="1.5" stroke-linecap="round" stroke-linejoin="round"><rect x="2.500" y="3" width="19" height="18" rx="1.500"/><path d="M12 3v18"/></svg><svg style="left:3076.0px;top:140.0px" width="28" height="28" viewBox="0 0 24 24" fill="none" stroke="#c5cad3" stroke-width="1.5" stroke-linecap="round" stroke-linejoin="round"><circle cx="3.500" cy="12" r="1.400" fill="#c5cad3" stroke="none"/><circle cx="12" cy="12" r="1.400" fill="#c5cad3" stroke="none"/><circle cx="20.500" cy="12" r="1.400" fill="#c5cad3" stroke="none"/></svg><svg style="left:2920.0px;top:89.0px" width="30" height="30" viewBox="0 0 24 24" fill="none" stroke="#9da5b4" stroke-width="1.5" stroke-linecap="round" stroke-linejoin="round"><rect x="3" y="3" width="7" height="18" rx="1.500"/><rect x="14.500" y="3" width="7" height="7" rx="1.500"/><rect x="14.500" y="14" width="7" height="7" rx="1.500"/></svg><svg style="left:2971.0px;top:89.0px" width="30" height="30" viewBox="0 0 24 24" fill="none" stroke="#9da5b4" stroke-width="1.5" stroke-linecap="round" stroke-linejoin="round"><rect x="2" y="3" width="20" height="18" rx="1.500"/><path d="M2.700 3.700h8v16.600h-8z" fill="#9da5b4"/></svg><svg style="left:3023.0px;top:89.0px" width="30" height="30" viewBox="0 0 24 24" fill="none" stroke="#9da5b4" stroke-width="1.5" stroke-linecap="round" stroke-linejoin="round"><rect x="2" y="3" width="20" height="18" rx="1.500"/><path d="M2 15h20"/></svg><svg style="left:3076.0px;top:90.0px" width="28" height="28" viewBox="0 0 24 24" fill="none" stroke="#9da5b4" stroke-width="1.5" stroke-linecap="round" stroke-linejoin="round"><circle cx="3.500" cy="12" r="1.400" fill="#9da5b4" stroke="none"/><circle cx="12" cy="12" r="1.400" fill="#9da5b4" stroke="none"/><circle cx="20.500" cy="12" r="1.400" fill="#9da5b4" stroke="none"/></svg><span class="t" id="t25" style="left:939px;top:178.5px;font-size:26px;line-height:39.0px;color:#a3aab6;letter-spacing:0.34px;">packages</span><svg style="left:1057.0px;top:186.0px" width="26" height="26" viewBox="0 0 24 24" fill="none" stroke="#a3aab6" stroke-width="1.5" stroke-linecap="round" stroke-linejoin="round"><path d="M9 5l7 7-7 7"/></svg><span class="t" id="t26" style="left:1087px;top:178.5px;font-size:26px;line-height:39.0px;color:#a3aab6;letter-spacing:0.90px;">mcp-server</span><svg style="left:1230.0px;top:186.0px" width="26" height="26" viewBox="0 0 24 24" fill="none" stroke="#a3aab6" stroke-width="1.5" stroke-linecap="round" stroke-linejoin="round"><path d="M9 5l7 7-7 7"/></svg><span class="t" id="t27" style="left:1259px;top:178.5px;font-size:26px;line-height:39.0px;color:#a3aab6;letter-spacing:0.44px;">src</span><svg style="left:1299.0px;top:186.0px" width="26" height="26" viewBox="0 0 24 24" fill="none" stroke="#a3aab6" stroke-width="1.5" stroke-linecap="round" stroke-linejoin="round"><path d="M9 5l7 7-7 7"/></svg><div class="abs" style="left:1332px;top:186px;width:24px;height:24px;background:#f5c842;overflow:hidden"><span style="position:absolute;right:1px;bottom:0px;font:700 14.4px/1 'Liberation Sans','Noto Sans CJK SC',sans-serif;color:#1a1a1a;letter-spacing:-0.5px">JS</span></div><span class="t" id="t28" style="left:1373px;top:178.5px;font-size:26px;line-height:39.0px;color:#a3aab6;letter-spacing:0.24px;">server.js</span><svg style="left:1477.0px;top:186.0px" width="26" height="26" viewBox="0 0 24 24" fill="none" stroke="#a3aab6" stroke-width="1.5" stroke-linecap="round" stroke-linejoin="round"><path d="M9 5l7 7-7 7"/></svg><span class="t" id="t29" style="left:1507px;top:178.5px;font-size:26px;line-height:39.0px;color:#a3aab6;letter-spacing:-1.22px;">...</span><div class="abs" style="left:112px;top:1920px;width:3024px;height:44px;background:linear-gradient(#1e2129 0,#1e2129 65%,#1f2226 100%)"></div><svg style="left:140.0px;top:1927.0px" width="30" height="30" viewBox="0 0 24 24" fill="none" stroke="#9da5b4" stroke-width="1.5" stroke-linecap="round" stroke-linejoin="round"><circle cx="7" cy="5" r="2.500"/><circle cx="7" cy="19.500" r="2.500"/><circle cx="17.500" cy="8.500" r="2.500"/><path d="M7 7.500v9.500M17.500 11c0 3.500-3 4-6 4.300-2.200.2-4 .4-4.500 1.500"/></svg><span class="t" id="t30" style="left:177px;top:1925.0px;font-size:24px;line-height:36.0px;color:#9da5b4;letter-spacing:0.53px;">main*</span><svg style="left:254.0px;top:1928.0px" width="28" height="28" viewBox="0 0 24 24" fill="none" stroke="#9da5b4" stroke-width="1.6" stroke-linecap="round" stroke-linejoin="round"><path d="M4 9.500A8.300 8.300 0 0 1 19.500 8M20 14.500A8.300 8.300 0 0 1 4.500 16"/><path d="M20 3.500V8h-4.500M4 20.500V16h4.500"/></svg><svg style="left:314.0px;top:1928.0px" width="28" height="28" viewBox="0 0 24 24" fill="none" stroke="#9da5b4" stroke-width="1.5" stroke-linecap="round" stroke-linejoin="round"><path d="M21.500 2.500c-5.500 0-9.500 2.500-12 7.500l-4.500.5-2.500 3.500 4.500.5 3 3 .5 4.500 3.500-2.500.5-4.500c5-2.500 7.500-6.500 7.500-12z"/><circle cx="15" cy="9" r="1.800"/><path d="M5.500 17.500c-1.500.5-2.500 2-2.500 4 2 0 3.500-1 4-2.500"/></svg><svg style="left:343.0px;top:1929.0px" width="26" height="26" viewBox="0 0 24 24" fill="none" stroke="#9da5b4" stroke-width="1.5" stroke-linecap="round" stroke-linejoin="round"><path d="M14.500 5.500l4 4-4.500 4.500c-1.500 1.500-3.500 1.500-5 0s-1.500-3.500 0-5zM9 14.500l-6 6M16.500 7.500l4-4M12 4.500l3-3M19.500 12l3-3" transform="rotate(0 12 12)"/></svg><span class="t" id="t31" style="left:378px;top:1925.0px;font-size:24px;line-height:36.0px;color:#9da5b4;letter-spacing:0.47px;">Launchpad</span><svg style="left:533.5px;top:1928.5px" width="27" height="27" viewBox="0 0 24 24" fill="none" stroke="#9da5b4" stroke-width="1.6" stroke-linecap="round" stroke-linejoin="round"><circle cx="12" cy="12" r="9.500"/><path d="M8 8l8 8M16 8l-8 8"/></svg><span class="t" id="t32" style="left:571px;top:1925.0px;font-size:24px;line-height:36.0px;color:#9da5b4;">1</span><svg style="left:590.5px;top:1928.5px" width="27" height="27" viewBox="0 0 24 24" fill="none" stroke="#9da5b4" stroke-width="1.6" stroke-linecap="round" stroke-linejoin="round"><path d="M12 2.500L22.500 21h-21z"/><path d="M12 9.500v6M12 18v.3"/></svg><span class="t" id="t33" style="left:626px;top:1925.0px;font-size:24px;line-height:36.0px;color:#9da5b4;">6</span><svg style="left:646.5px;top:1928.5px" width="27" height="27" viewBox="0 0 24 24" fill="none" stroke="#9da5b4" stroke-width="1.6" stroke-linecap="round" stroke-linejoin="round"><circle cx="12" cy="12" r="9.500"/><path d="M12 11v6M12 7.300v.3"/></svg><span class="t" id="t34" style="left:684px;top:1925.0px;font-size:24px;line-height:36.0px;color:#9da5b4;letter-spacing:0.65px;">16</span><span class="t" id="t35" style="left:745px;top:1925.0px;font-size:24px;line-height:36.0px;color:#9da5b4;letter-spacing:0.75px;">packages/mcp-server/src/server.js</span><span class="t" id="t36" style="left:1168px;top:1925.0px;font-size:24px;line-height:36.0px;color:#9da5b4;letter-spacing:0.99px;">-- NORMAL --</span><span class="t" id="t37" style="left:2487px;top:1925.0px;font-size:24px;line-height:36.0px;color:#9da5b4;letter-spacing:0.70px;">行 1，列 19</span><span class="t" id="t38" style="left:2651px;top:1925.0px;font-size:24px;line-height:36.0px;color:#9da5b4;letter-spacing:0.06px;">空格: 2</span><span class="t" id="t39" style="left:2760px;top:1925.0px;font-size:24px;line-height:36.0px;color:#9da5b4;letter-spacing:0.80px;">UTF-8</span><span class="t" id="t40" style="left:2866px;top:1925.0px;font-size:24px;line-height:36.0px;color:#9da5b4;letter-spacing:0.51px;">2.18 KB</span><svg style="left:2987.0px;top:1928.0px" width="28" height="28" viewBox="0 0 24 24" fill="none" stroke="#9da5b4" stroke-width="1.5" stroke-linecap="round" stroke-linejoin="round"><path d="M1.500 13l4 4.500L16 5M9.500 15l2.500 2.500L22.500 5"/></svg><span class="t" id="t41" style="left:3023px;top:1925.0px;font-size:24px;line-height:36.0px;color:#9da5b4;letter-spacing:0.58px;">Prettier</span></div></div>
<svg style="left:2600px;top:40px" width="360" height="110" viewBox="2600 40 360 110"><defs><filter id="sh" x="-10%" y="-20%" width="120%" height="150%"><feDropShadow dx="0" dy="2" stdDeviation="2.500" flood-color="#000" flood-opacity=".35"/></filter></defs><path filter="url(#sh)" d="M2647 63h264a8 8 0 0 1 8 8v26a8 8 0 0 1-8 8h-128.500L2746 134.500 2755 105H2647a8 8 0 0 1-8-8V71a8 8 0 0 1 8-8z" fill="#e0532f"/></svg><span class="t" id="t42" style="left:2656px;top:62.8px;font-size:27px;line-height:40.5px;color:#ffffff;font-weight:700;letter-spacing:0.33px;">自带管理器打开文件</span><span class="t" id="t43" style="left:2965px;top:2031.0px;font-size:24px;line-height:36.0px;color:#ffffff;letter-spacing:0.39px;text-shadow:0 0 3px rgba(0,0,0,.85),0 0 2px rgba(0,0,0,.7),1px 1px 2px rgba(0,0,0,.6);">掘金技术社区 @ 清沫</span></body></html>
